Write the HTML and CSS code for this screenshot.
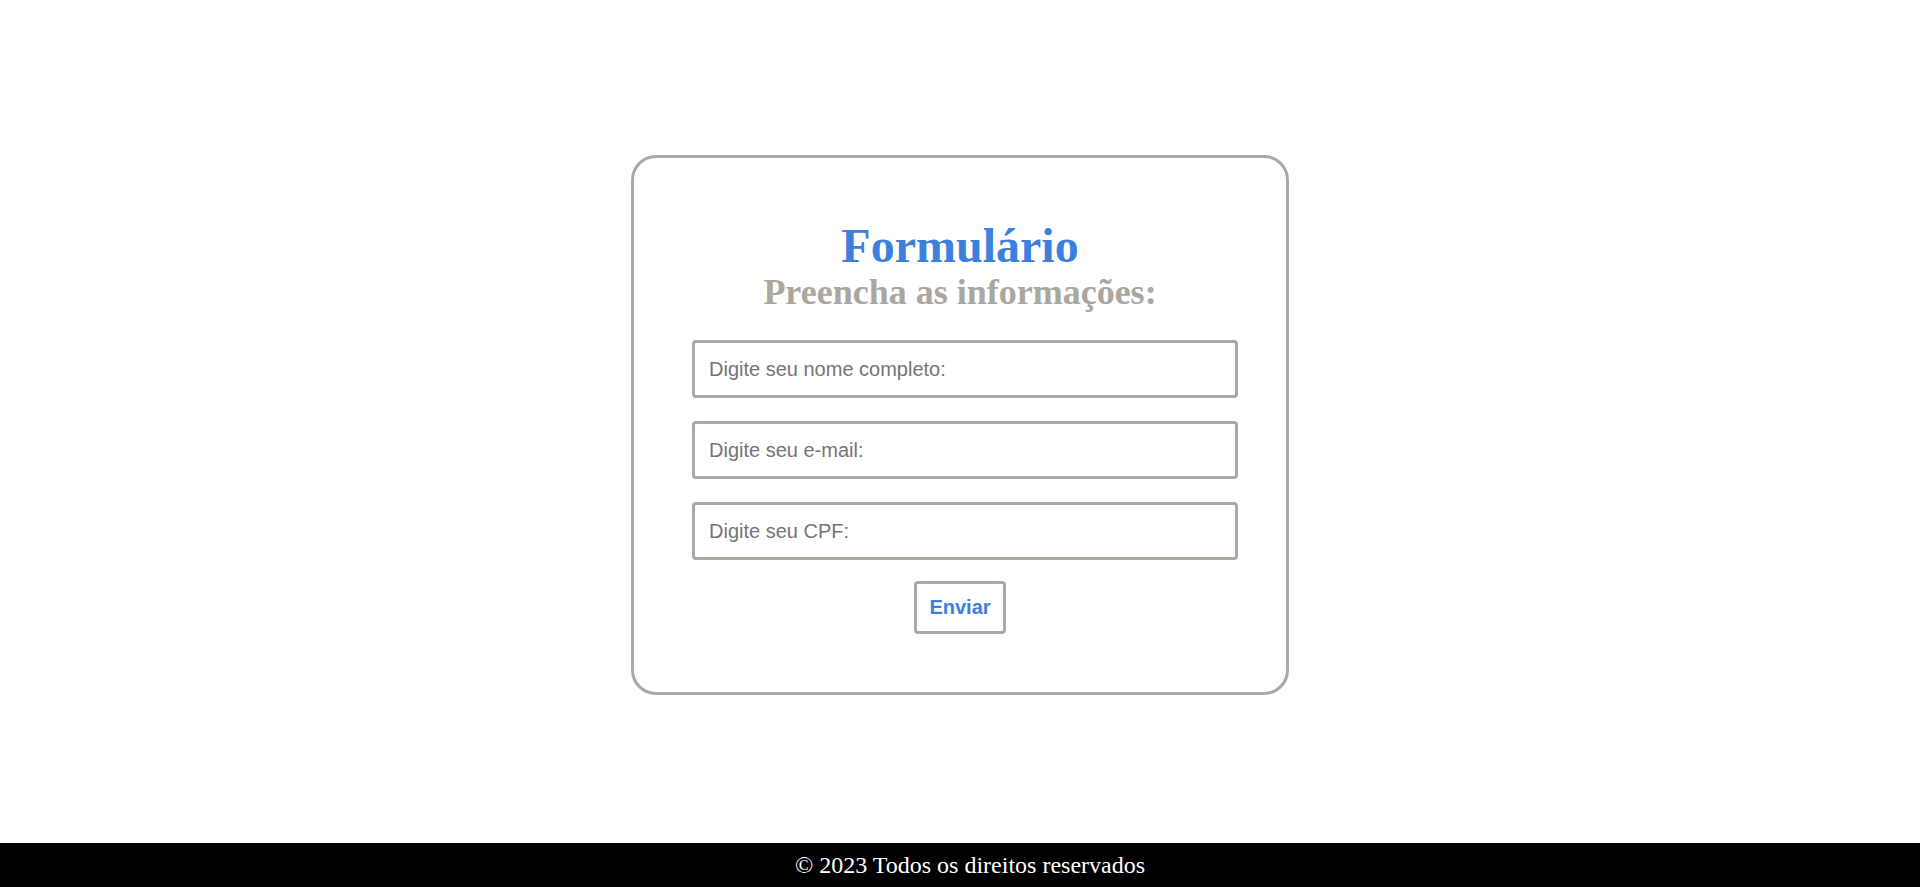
FILE: index.html
```html
<!DOCTYPE html>
<html lang="pt-BR">
<head>
<meta charset="utf-8">
<title>Formulário</title>
<link rel="stylesheet" href="styles.css">
</head>
<body>
<main class="page">
  <form class="card" onsubmit="return false;">
    <h1 class="title">Formulário</h1>
    <h2 class="subtitle">Preencha as informações:</h2>
    <div class="fields">
      <input class="field" type="text" placeholder="Digite seu nome completo:">
      <input class="field" type="email" placeholder="Digite seu e-mail:">
      <input class="field" type="text" placeholder="Digite seu CPF:">
    </div>
    <button class="submit" type="submit">Enviar</button>
  </form>
</main>
<footer class="footer">© 2023 Todos os direitos reservados</footer>
</body>
</html>
```

FILE: styles.css
```css
* {
  box-sizing: border-box;
}

html, body {
  margin: 0;
  padding: 0;
}

body {
  min-height: 100vh;
  display: flex;
  flex-direction: column;
  background: #ffffff;
  font-family: "Liberation Serif", "Times New Roman", serif;
}

.page {
  flex: 1;
  display: flex;
  justify-content: center;
  align-items: center;
  padding-top: 7px;
}

.card {
  width: 658px;
  border: 3px solid #aaa9a4;
  border-radius: 25px;
  padding: 62px 0 58px;
  display: flex;
  flex-direction: column;
  align-items: center;
  background: #ffffff;
}

.title {
  margin: 0;
  font-size: 48px;
  line-height: 52px;
  font-weight: bold;
  color: #3c7fdc;
  text-align: center;
}

.subtitle {
  margin: 0;
  font-size: 36px;
  line-height: 41px;
  font-weight: bold;
  color: #aaa6a0;
  text-align: center;
}

.fields {
  margin-top: 27px;
  margin-left: 10px;
  display: flex;
  flex-direction: column;
  gap: 23px;
}

.field {
  width: 546px;
  height: 58px;
  border: 3px solid #aaa9a4;
  border-radius: 4px;
  padding: 0 14px;
  font-family: "Liberation Sans", Arial, sans-serif;
  font-size: 20px;
  color: #333333;
  background: #ffffff;
  outline: none;
}

.field::placeholder {
  color: #757575;
}

.submit {
  margin-top: 21px;
  height: 53px;
  padding: 0 12px;
  border: 3px solid #aaa9a4;
  border-radius: 4px;
  background: #ffffff;
  color: #3c7fdc;
  font-family: "Liberation Sans", Arial, sans-serif;
  font-size: 20px;
  font-weight: bold;
  cursor: pointer;
}

.footer {
  height: 44px;
  padding-left: 20px;
  background: #000000;
  color: #ffffff;
  font-size: 24px;
  display: flex;
  align-items: center;
  justify-content: center;
}
```
